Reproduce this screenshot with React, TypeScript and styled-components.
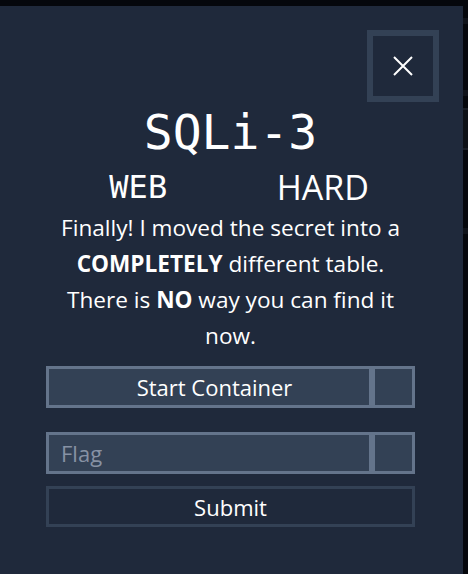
import React from "react";
import styled, { createGlobalStyle } from "styled-components";

const Global = createGlobalStyle`
  html, body { margin: 0; padding: 0; background: #05070c; }
  body { width: 468px; height: 574px; overflow: hidden; }
  * { box-sizing: border-box; }
`;

const Page = styled.div`
  display: flex;
  flex-direction: column;
  width: 468px;
  height: 574px;
`;

const TopStrip = styled.div`
  height: 6px;
  background: #05070c;
`;

const Main = styled.div`
  display: flex;
  flex: 1;
`;

const Modal = styled.div`
  width: 463px;
  height: 568px;
  background: #1f293b;
  display: flex;
  flex-direction: column;
  padding: 24px 24px 0 46px;
  color: #ffffff;
  font-family: "Open Sans", "Noto Sans", sans-serif;
`;

const SideStrip = styled.div`
  flex: 1;
  display: flex;
  flex-direction: column;
  background: #05070c;
`;

const SideBlock = styled.div<{ $h: number; $c: string }>`
  height: ${(p) => p.$h}px;
  background: ${(p) => p.$c};
  flex-shrink: 0;
`;

const CloseRow = styled.div`
  display: flex;
  justify-content: flex-end;
`;

const CloseButton = styled.button`
  width: 72px;
  height: 72px;
  border: 6px solid #334155;
  background: transparent;
  display: flex;
  align-items: center;
  justify-content: center;
  padding: 0;
  cursor: pointer;
`;

const Content = styled.div`
  width: 369px;
  display: flex;
  flex-direction: column;
`;

const Title = styled.h1`
  margin: 0;
  font-family: "DejaVu Sans Mono", monospace;
  font-weight: 400;
  font-size: 48px;
  line-height: 60px;
  text-align: center;
`;

const MetaRow = styled.div`
  display: grid;
  grid-template-columns: 1fr 1fr;
  margin-top: 2px;
  line-height: 46px;
  text-align: center;
`;

const Category = styled.div`
  font-family: "DejaVu Sans Mono", monospace;
  font-size: 32px;
`;

const Difficulty = styled.div`
  font-family: "Open Sans", sans-serif;
  font-size: 34px;
`;

const Description = styled.p`
  margin: 0;
  font-size: 22.6px;
  line-height: 36px;
  text-align: center;
  white-space: nowrap;
  b { font-weight: 700; }
`;

const Group = styled.div<{ $mt: number }>`
  display: flex;
  height: 42px;
  margin-top: ${(p) => p.$mt}px;
`;

const StartButton = styled.button`
  flex: 1;
  height: 100%;
  background: #334155;
  border: 3px solid #64748b;
  color: #ffffff;
  font-family: "Open Sans", sans-serif;
  font-size: 22px;
  padding: 0 0 0 11px;
  cursor: pointer;
`;

const SideCell = styled.div`
  width: 43px;
  height: 100%;
  background: #334155;
  border: 3px solid #64748b;
`;

const FlagInput = styled.input`
  flex: 1;
  min-width: 0;
  height: 100%;
  background: #334155;
  border: 3px solid #64748b;
  color: #ffffff;
  font-family: "Open Sans", sans-serif;
  font-size: 22px;
  padding: 0 12px;
  outline: none;
  &::placeholder { color: #8792a4; }
`;

const SubmitButton = styled.button`
  width: 100%;
  height: 41px;
  margin-top: 12px;
  background: #1f293b;
  border: 3px solid #334155;
  color: #ffffff;
  font-family: "Open Sans", sans-serif;
  font-size: 22px;
  padding: 0;
  cursor: pointer;
`;

export default function App() {
  return (
    <>
      <Global />
      <Page>
        <TopStrip />
        <Main>
          <Modal>
            <CloseRow>
              <CloseButton aria-label="Close">
                <svg width="20" height="20" viewBox="0 0 20 20">
                  <path d="M1 1 L19 19 M19 1 L1 19" stroke="#ffffff" strokeWidth="2" fill="none" />
                </svg>
              </CloseButton>
            </CloseRow>
            <Content>
              <Title>SQLi-3</Title>
              <MetaRow>
                <Category>WEB</Category>
                <Difficulty>HARD</Difficulty>
              </MetaRow>
              <Description>
                Finally! I moved the secret into a
                <br />
                <b>COMPLETELY</b> different table.
                <br />
                There is <b>NO</b> way you can find it
                <br />
                now.
              </Description>
              <Group $mt={12}>
                <StartButton>Start Container</StartButton>
                <SideCell />
              </Group>
              <Group $mt={24}>
                <FlagInput placeholder="Flag" />
                <SideCell />
              </Group>
              <SubmitButton>Submit</SubmitButton>
            </Content>
          </Modal>
          <SideStrip>
            <SideBlock $h={12} $c="#05070c" />
            <SideBlock $h={6} $c="#10131a" />
            <SideBlock $h={66} $c="#05070c" />
            <SideBlock $h={6} $c="#10131a" />
            <SideBlock $h={12} $c="#05070c" />
            <SideBlock $h={2} $c="#1a1e26" />
            <SideBlock $h={38} $c="#0d1016" />
            <SideBlock $h={2} $c="#1a1e26" />
            <SideBlock $h={78} $c="#05070c" />
            <SideBlock $h={6} $c="#10131a" />
          </SideStrip>
        </Main>
      </Page>
    </>
  );
}
